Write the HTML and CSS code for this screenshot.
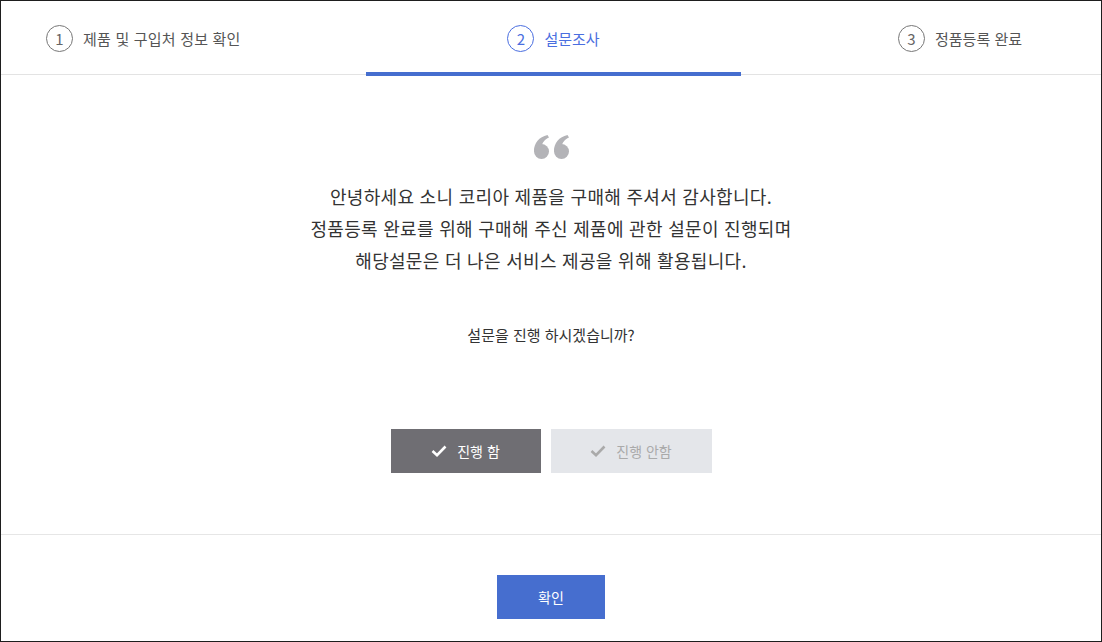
FILE: index.html
```html
<!DOCTYPE html>
<html lang="ko">
<head>
    <meta charset="UTF-8">
    <meta name="viewport" content="width=device-width, initial-scale=1.0">
    <title>정품등록</title>
    <link rel="stylesheet" href="styles.css">
</head>
<body>

    <div class="register">

        <!-- 단계 표시 -->
        <ul class="steps">
            <li class="step step-first"><span class="num">1</span>제품 및 구입처 정보 확인</li>
            <li class="step step-mid active"><span class="num">2</span>설문조사</li>
            <li class="step step-last"><span class="num">3</span>정품등록 완료</li>
        </ul>

        <div class="survey">
            <svg class="quote" width="36" height="24" viewBox="0 0 36 24">
                <g fill="#b3b3b7">
                    <circle cx="7.5" cy="16.5" r="7.5"/>
                    <path d="M0 16 C0 8 5 2 13.5 0 L15 2.6 C10.5 4.6 8 8 8 11.5 Z"/>
                    <circle cx="27.5" cy="16.5" r="7.5"/>
                    <path d="M20 16 C20 8 25 2 33.5 0 L35 2.6 C30.5 4.6 28 8 28 11.5 Z"/>
                </g>
            </svg>

            <p class="intro">
                안녕하세요 소니 코리아 제품을 구매해 주셔서 감사합니다.<br>
                정품등록 완료를 위해 구매해 주신 제품에 관한 설문이 진행되며<br>
                해당설문은 더 나은 서비스 제공을 위해 활용됩니다.
            </p>

            <p class="question">설문을 진행 하시겠습니까?</p>

            <div class="choices">
                <button class="choice choice-yes">
                    <svg width="16" height="12" viewBox="0 0 16 12"><path d="M1.5 6 L6 10.2 L14.5 1.5" fill="none" stroke="currentColor" stroke-width="2.6"/></svg>
                    진행 함
                </button>
                <button class="choice choice-no">
                    <svg width="16" height="12" viewBox="0 0 16 12"><path d="M1.5 6 L6 10.2 L14.5 1.5" fill="none" stroke="currentColor" stroke-width="2.6"/></svg>
                    진행 안함
                </button>
            </div>
        </div>

        <div class="footer">
            <button class="confirm">확인</button>
        </div>

    </div>

</body>
</html>
```

FILE: styles.css
```css
html {
  box-sizing: border-box;
}

*, *:before, *:after {
  box-sizing: inherit;
}

body {
  margin: 0;
  font-family: "Noto Sans CJK KR", "Noto Sans", sans-serif;
  color: #333;
  background: white;
}

.register {
  width: 1102px;
  height: 642px;
  border: 1px solid #1e1e1e;
  display: flex;
  flex-direction: column;
}

/* steps */
.steps {
  list-style: none;
  margin: 0;
  padding: 0;
  display: flex;
  height: 74px;
  border-bottom: 1px solid #e3e3e3;
}

.step {
  display: flex;
  align-items: center;
  height: 74px;
  font-size: 15px;
  color: #555;
}

.step-first {
  width: 365px;
  padding-left: 45px;
  letter-spacing: 0.2px;
}

.step-mid {
  width: 375px;
  justify-content: center;
}

.step-last {
  flex: 1;
  justify-content: flex-end;
  padding-right: 79px;
}

.step .num {
  width: 27px;
  height: 27px;
  border: 1px solid #777;
  border-radius: 50%;
  display: flex;
  align-items: center;
  justify-content: center;
  margin-right: 10px;
  font-size: 15px;
  color: #666;
}

.step.active {
  color: #4a6ee0;
  border-bottom: 4px solid #456ecf;
  padding-top: 4px;
  height: 75px;
  margin-bottom: -1px;
}

.step.active .num {
  border-color: #4a6ee0;
  color: #4a6ee0;
}

/* survey */
.survey {
  flex: 1;
  display: flex;
  flex-direction: column;
  align-items: center;
  padding-top: 60px;
  border-bottom: 1px solid #e6e6e6;
}

.quote {
  display: block;
  margin-left: 1px;
}

.intro {
  margin: 21px 0 0;
  text-align: center;
  font-size: 18px;
  letter-spacing: 0.3px;
  line-height: 32px;
  color: #333;
}

.question {
  margin: 48px 0 0;
  font-size: 15px;
  color: #333;
}

.choices {
  display: flex;
  gap: 10px;
  margin-top: 84px;
}

.choice {
  height: 44px;
  border: 0;
  font-family: inherit;
  font-size: 14px;
  display: flex;
  align-items: center;
  justify-content: center;
  gap: 10px;
  cursor: pointer;
}

.choice-yes {
  width: 150px;
  background: #6f6e73;
  color: white;
}

.choice-no {
  width: 161px;
  background: #e4e6ea;
  color: #aaa;
}

/* footer */
.footer {
  height: 106px;
  display: flex;
  justify-content: center;
  padding-top: 40px;
}

.confirm {
  width: 108px;
  height: 44px;
  border: 0;
  background: #466ecf;
  color: white;
  font-family: inherit;
  font-size: 14px;
  cursor: pointer;
}
```
